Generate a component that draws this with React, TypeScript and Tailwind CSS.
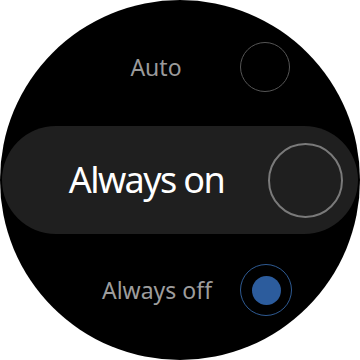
import React from "react";

export default function App() {
  return (
    <div className="w-[360px] h-[360px] bg-white overflow-hidden" style={{ fontFamily: '"Noto Sans", "Open Sans", sans-serif' }}>
      <div className="w-[360px] h-[360px] rounded-full bg-black flex flex-col">
        <div className="mt-[42px] h-[50px] flex items-center">
          <div className="ml-[106px] w-[100px] text-center text-[23px] leading-none text-[#9a9a9a]">Auto</div>
          <div className="ml-[34px] w-[50px] h-[50px] rounded-full border-[1.5px] border-[#555555]" />
        </div>
        <div className="mt-[34px] mx-[2px] h-[108px] rounded-full bg-[#1f1f1f] flex items-center">
          <div className="ml-[42px] w-[205px] text-center text-[36px] tracking-[-1.6px] leading-none text-white">Always on</div>
          <div className="ml-[19px] w-[75px] h-[75px] rounded-full border-[2.5px] border-[#7a7a7a]" />
        </div>
        <div className="mt-[30px] h-[52px] flex items-center">
          <div className="ml-[97px] w-[120px] text-center text-[23px] leading-none text-[#9d9d9d]">Always off</div>
          <div className="ml-[23px] w-[52px] h-[52px] rounded-full border-[1.5px] border-[#2e5a92] flex items-center justify-center">
            <div className="w-[29px] h-[29px] rounded-full bg-[#2c5c9d]" />
          </div>
        </div>
      </div>
    </div>
  );
}
